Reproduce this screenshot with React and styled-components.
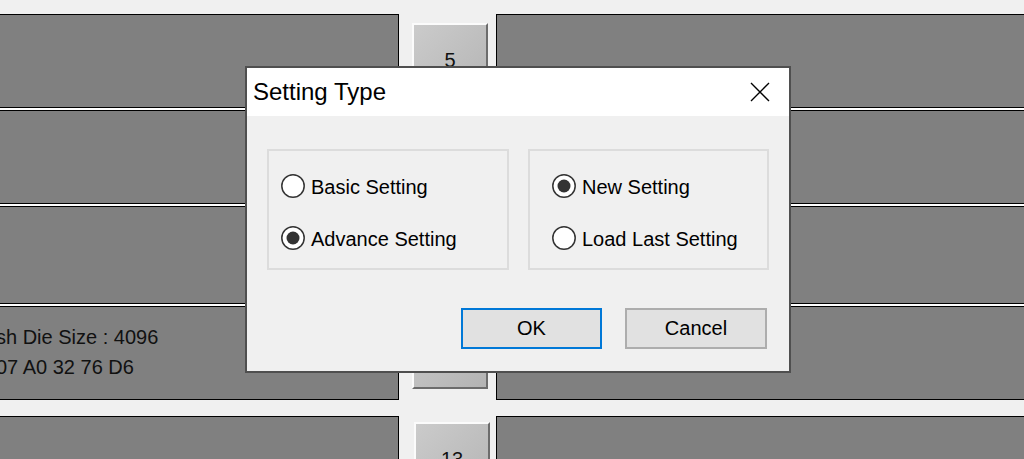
import React from "react";
import styled, { createGlobalStyle } from "styled-components";

const GlobalStyle = createGlobalStyle`
  html, body {
    margin: 0;
    padding: 0;
    background: #f0f0f0;
    overflow: hidden;
  }
  body {
    font-family: "Liberation Sans", Arial, sans-serif;
  }
`;

const Screen = styled.div`
  position: relative;
  width: 1024px;
  height: 459px;
  overflow: hidden;
  background: #f0f0f0;
`;

const Board = styled.div`
  display: grid;
  grid-template-columns: 399px 97px 1fr;
  row-gap: 16px;
  padding-top: 14px;
`;

const Stack = styled.div`
  display: flex;
  flex-direction: column;
  gap: 2px;
  align-self: start;
  background: #fff;
  margin: ${(p) => (p.$side === "left" ? "0 0 0 -2px" : "0 -2px 0 0")};
`;

const Panel = styled.div`
  height: ${(p) => p.$h}px;
  box-sizing: border-box;
  background: #808080;
  border: 1px solid #000;
  padding-top: 15px;
  font-size: 20px;
  line-height: 30px;
  color: #111;
  white-space: nowrap;
  overflow: hidden;
`;

const InfoLine = styled.div`
  margin-left: -3px;
`;

const Slots = styled.div`
  display: flex;
  flex-direction: column;
  gap: 2px;
  align-self: start;
`;

const Slot = styled.div`
  height: 94px;
  box-sizing: border-box;
  padding: ${(p) => (p.$shift ? "6px 0 0 15px" : "9px 0 0 13px")};
`;

const PortButton = styled.div`
  width: 76px;
  height: 78px;
  box-sizing: border-box;
  border: 2px solid;
  border-color: #fbfbfb #6c6c6c #6c6c6c #fbfbfb;
  background: linear-gradient(135deg, #cbcbcb 0%, #bdbdbd 60%, #b3b3b3 100%);
  display: flex;
  align-items: center;
  justify-content: center;
  padding-bottom: 4px;
  font-size: 20px;
  color: #111;
`;

const Dialog = styled.div`
  position: absolute;
  left: 245px;
  top: 66px;
  width: 546px;
  height: 307px;
  box-sizing: border-box;
  border: 2px solid #4f4f4f;
  background: #f0f0f0;
  display: flex;
  flex-direction: column;
`;

const TitleBar = styled.div`
  height: 48px;
  background: #fff;
  display: flex;
  align-items: center;
  justify-content: space-between;
  padding: 0 19px 0 6px;
`;

const Title = styled.span`
  font-size: 24px;
  color: #000;
`;

const Body = styled.div`
  display: flex;
  flex-direction: column;
  padding: 33px 20px 0;
`;

const Groups = styled.div`
  display: flex;
  gap: 19px;
`;

const GroupBox = styled.div`
  width: ${(p) => p.$w}px;
  height: 121px;
  box-sizing: border-box;
  border: 2px solid #dcdcdc;
  padding: 23px 0 0 ${(p) => p.$inset}px;
  display: flex;
  flex-direction: column;
  gap: 28px;
`;

const RadioRow = styled.label`
  display: flex;
  align-items: center;
  gap: 6px;
  height: 24px;
  font-size: 20px;
  color: #000;
  white-space: nowrap;
`;

const RadioText = styled.span`
  padding-top: 3px;
`;

const ButtonRow = styled.div`
  display: flex;
  justify-content: flex-end;
  gap: 23px;
  margin-top: 38px;
  padding-right: 2px;
`;

const DlgButton = styled.div`
  width: ${(p) => p.$w}px;
  height: 41px;
  box-sizing: border-box;
  border: 2px solid ${(p) => (p.$primary ? "#0078d7" : "#adadad")};
  background: #e1e1e1;
  display: flex;
  align-items: center;
  justify-content: center;
  font-size: 20px;
  color: #000;
`;

function Radio({ checked }) {
  return (
    <svg width="24" height="24" viewBox="0 0 24 24">
      <circle cx="12" cy="12" r="11.2" fill="#fff" stroke="#333" strokeWidth="1.5" />
      {checked && <circle cx="12" cy="12" r="6.5" fill="#333" />}
    </svg>
  );
}

function CloseIcon() {
  return (
    <svg width="20" height="20" viewBox="0 0 20 20">
      <path d="M1 1 L19 19 M19 1 L1 19" stroke="#000" strokeWidth="1.4" fill="none" />
    </svg>
  );
}

const groupOne = [94, 94, 98, 94];
const groupTwo = [94, 94, 94, 94];

export default function App() {
  return (
    <>
      <GlobalStyle />
      <Screen>
        <Board>
          <Stack $side="left">
            {groupOne.map((h, i) => (
              <Panel key={i} $h={h}>
                {i === 3 && (
                  <>
                    <InfoLine>sh Die Size : 4096</InfoLine>
                    <InfoLine>07 A0 32 76 D6</InfoLine>
                  </>
                )}
              </Panel>
            ))}
          </Stack>
          <Slots>
            {["5", "7", "9", "11"].map((n) => (
              <Slot key={n}>
                <PortButton>{n}</PortButton>
              </Slot>
            ))}
          </Slots>
          <Stack $side="right">
            {groupOne.map((h, i) => (
              <Panel key={i} $h={h} />
            ))}
          </Stack>

          <Stack $side="left">
            {groupTwo.map((h, i) => (
              <Panel key={i} $h={h} />
            ))}
          </Stack>
          <Slots>
            {["13", "15", "17", "19"].map((n) => (
              <Slot key={n} $shift>
                <PortButton>{n}</PortButton>
              </Slot>
            ))}
          </Slots>
          <Stack $side="right">
            {groupTwo.map((h, i) => (
              <Panel key={i} $h={h} />
            ))}
          </Stack>
        </Board>

        <Dialog>
          <TitleBar>
            <Title>Setting Type</Title>
            <CloseIcon />
          </TitleBar>
          <Body>
            <Groups>
              <GroupBox $w={242} $inset={12}>
                <RadioRow>
                  <Radio />
                  <RadioText>Basic Setting</RadioText>
                </RadioRow>
                <RadioRow>
                  <Radio checked />
                  <RadioText>Advance Setting</RadioText>
                </RadioRow>
              </GroupBox>
              <GroupBox $w={241} $inset={22}>
                <RadioRow>
                  <Radio checked />
                  <RadioText>New Setting</RadioText>
                </RadioRow>
                <RadioRow>
                  <Radio />
                  <RadioText>Load Last Setting</RadioText>
                </RadioRow>
              </GroupBox>
            </Groups>
            <ButtonRow>
              <DlgButton $primary $w={141}>OK</DlgButton>
              <DlgButton $w={142}>Cancel</DlgButton>
            </ButtonRow>
          </Body>
        </Dialog>
      </Screen>
    </>
  );
}
